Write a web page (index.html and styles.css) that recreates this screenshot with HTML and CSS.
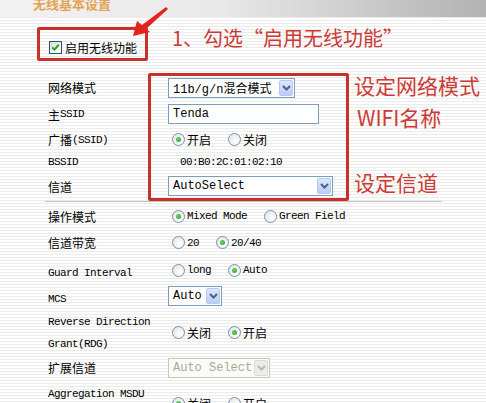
FILE: index.html
```html
<!DOCTYPE html>
<html lang="zh-CN">
<head>
    <meta charset="UTF-8">
    <meta name="viewport" content="width=device-width, initial-scale=1.0">
    <title>无线基本设置</title>
    <link rel="stylesheet" href="styles.css">
</head>
<body>
    <div class="topbar">
        <h2>无线基本设置</h2>
    </div>

    <!-- step 1: enable wireless -->
    <div class="step1">
        <label class="mark enable">
            <span class="check"><svg width="11" height="11" viewBox="0 0 11 11"><path d="M2.2 5.4l2.2 2.2 4.4-4.8" fill="none" stroke="#21a121" stroke-width="2"/></svg></span>
            启用无线功能
        </label>
        <p class="note note-1">1、勾选“启用无线功能”</p>
    </div>

    <!-- wireless mode / ssid / channel -->
    <div class="group">
        <div class="labels">
            <div class="row r1">网络模式</div>
            <div class="row r2">主<span class="en">SSID</span></div>
            <div class="row r3">广播<span class="en">(SSID)</span></div>
            <div class="row r4"><span class="en">BSSID</span></div>
            <div class="row r5">信道</div>
        </div>
        <div class="mark fields">
            <div class="row r1">
                <div class="sel w-mode"><span class="val"><span class="en-c">11b/g/n</span>混合模式</span><span class="btn"><svg width="9" height="6" viewBox="0 0 9 6"><path d="M1 1l3.5 3.5L8 1" fill="none" stroke="#4d6185" stroke-width="2"/></svg></span></div>
            </div>
            <div class="row r2">
                <div class="input w-ssid"><span class="en-c">Tenda</span></div>
            </div>
            <div class="row r3">
                <div class="radios">
                    <span class="opt"><span class="radio on"></span>开启</span>
                    <span class="opt"><span class="radio"></span>关闭</span>
                </div>
            </div>
            <div class="row r4">
                <span class="en bssid">00:B0:2C:01:02:10</span>
            </div>
            <div class="row r5">
                <div class="sel w-chan"><span class="val en-c">AutoSelect</span><span class="btn"><svg width="9" height="6" viewBox="0 0 9 6"><path d="M1 1l3.5 3.5L8 1" fill="none" stroke="#4d6185" stroke-width="2"/></svg></span></div>
            </div>
        </div>
        <div class="notes">
            <p class="note n-mode">设定网络模式</p>
            <p class="note n-ssid">WIFI名称</p>
            <p class="note n-chan">设定信道</p>
        </div>
    </div>

    <div class="sep"></div>

    <!-- advanced options -->
    <div class="form">
        <div class="field f-op">
            <div class="label">操作模式</div>
            <div class="radios">
                <span class="opt"><span class="radio on"></span><span class="en">Mixed Mode</span></span>
                <span class="opt"><span class="radio"></span><span class="en">Green Field</span></span>
            </div>
        </div>
        <div class="field f-bw">
            <div class="label">信道带宽</div>
            <div class="radios">
                <span class="opt"><span class="radio"></span><span class="en">20</span></span>
                <span class="opt"><span class="radio on"></span><span class="en">20/40</span></span>
            </div>
        </div>
        <div class="field f-gi">
            <div class="label"><span class="en">Guard Interval</span></div>
            <div class="radios">
                <span class="opt"><span class="radio"></span><span class="en">long</span></span>
                <span class="opt"><span class="radio on"></span><span class="en">Auto</span></span>
            </div>
        </div>
        <div class="field f-mcs">
            <div class="label"><span class="en">MCS</span></div>
            <div class="sel w-mcs"><span class="val en-c">Auto</span><span class="btn"><svg width="9" height="6" viewBox="0 0 9 6"><path d="M1 1l3.5 3.5L8 1" fill="none" stroke="#4d6185" stroke-width="2"/></svg></span></div>
        </div>
        <div class="field f-rdg">
            <div class="label two-line"><span class="en">Reverse Direction<br>Grant(RDG)</span></div>
            <div class="radios">
                <span class="opt"><span class="radio"></span>关闭</span>
                <span class="opt"><span class="radio on"></span>开启</span>
            </div>
        </div>
        <div class="field f-ext">
            <div class="label">扩展信道</div>
            <div class="sel w-ext disabled"><span class="val en-c">Auto Select</span><span class="btn"><svg width="9" height="6" viewBox="0 0 9 6"><path d="M1 1l3.5 3.5L8 1" fill="none" stroke="#b8b8b0" stroke-width="2"/></svg></span></div>
        </div>
        <div class="field f-agg">
            <div class="label two-line"><span class="en">Aggregation MSDU<br>(A-MSDU)</span></div>
            <div class="radios">
                <span class="opt"><span class="radio on"></span>关闭</span>
                <span class="opt"><span class="radio"></span>开启</span>
            </div>
        </div>
    </div>

    <!-- red arrow pointing at the checkbox -->
    <svg class="arrow" width="200" height="45" viewBox="0 0 200 45">
        <path d="M133 36 L137 21 L142 25 L166 7 L168 9 L146 29 L150 32 Z" fill="#e3231c"/>
    </svg>
</body>
</html>
```

FILE: styles.css
```css
body {
    margin: 0;
    width: 486px;
    height: 403px;
    overflow: hidden;
    position: relative;
    font-family: "Noto Sans CJK SC", sans-serif;
    font-size: 12px;
    color: #000;
    background: repeating-linear-gradient(to bottom, #fff 0, #fff 2px, #ebebeb 2px, #ebebeb 3px);
}

.en {
    font-family: "Liberation Mono", "Noto Sans CJK SC", monospace;
    font-size: 11px;
    letter-spacing: -0.6px;
}

.en-c {
    font-family: "Liberation Mono", "Noto Sans CJK SC", monospace;
    font-size: 12px;
}

.topbar {
    height: 17px;
    overflow: hidden;
    background: linear-gradient(to right, #f2f2f2 0%, #e9e9e9 45%, #b2b2b2 100%);
}

.topbar h2 {
    margin: -3px 0 0;
    padding-left: 33px;
    font-size: 13px;
    line-height: 14px;
    font-weight: bold;
    color: #e2a452;
}

.mark {
    box-sizing: border-box;
    border: 3px solid #c6322b;
    border-radius: 2px;
}

.note {
    margin: 0;
    color: #cb3a35;
    white-space: nowrap;
}

/* step 1 */
.step1 {
    display: flex;
    margin-top: 10px;
}

.enable {
    display: flex;
    align-items: center;
    gap: 3px;
    width: 111px;
    height: 34px;
    margin-left: 37px;
    padding: 6px 0 0 9px;
}

.check {
    display: flex;
    align-items: center;
    justify-content: center;
    width: 13px;
    height: 13px;
    box-sizing: border-box;
    border: 1px solid #2b5574;
    background: linear-gradient(135deg, #dcdcd6, #fff);
}

.note-1 {
    margin-left: 24px;
    font-size: 20px;
    line-height: 22px;
}

/* group with the second red frame */
.group {
    display: flex;
    margin-top: 12px;
}

.row {
    display: flex;
    align-items: center;
}

.r1 { height: 23px; }
.r2 { height: 30px; }
.r3 { height: 21px; }
.r4 { height: 24px; }
.r5 { height: 24px; }

.labels {
    width: 100px;
    margin-left: 48px;
    padding-top: 3px;
}

.fields {
    width: 201px;
    height: 128px;
    padding-left: 17px;
}

.notes {
    display: flex;
    flex-direction: column;
    margin-left: 5px;
    font-size: 21px;
    line-height: 24px;
}

.n-mode { margin-top: 0; }
.n-ssid { margin-top: 8px; padding-left: 3px; }
.n-chan { margin-top: 41px; }

.bssid {
    padding-left: 12px;
}

/* form controls */
.sel, .input {
    display: flex;
    align-items: center;
    height: 20px;
    box-sizing: border-box;
    border: 1px solid #7f9db9;
    background: #fff;
    padding-left: 4px;
    white-space: nowrap;
}

.sel .btn {
    display: flex;
    align-items: center;
    justify-content: center;
    width: 14px;
    height: 16px;
    margin-left: auto;
    margin-right: 1px;
    border-radius: 2px;
    background: linear-gradient(#dce7fc, #b9cdf5);
    border: 1px solid #b4c8f0;
    box-sizing: border-box;
}

.w-mode { width: 127px; }
.w-ssid { width: 151px; }
.w-chan { width: 165px; }
.w-mcs { width: 54px; }
.w-ext { width: 102px; }

.sel.disabled {
    border-color: #c9c7ba;
    color: #aca899;
    background: #fbfbf8;
}

.sel.disabled .btn {
    background: #ececea;
    border-color: #dcdcd6;
}

.radios {
    display: flex;
    gap: 17px;
    padding-left: 4px;
}

.opt {
    display: flex;
    align-items: center;
    gap: 2px;
    white-space: nowrap;
}

.radio {
    position: relative;
    width: 13px;
    height: 13px;
    box-sizing: border-box;
    border: 1px solid #7891aa;
    border-radius: 50%;
    background: radial-gradient(circle at 65% 65%, #fff, #dde1e6);
}

.radio.on::after {
    content: "";
    position: absolute;
    left: 3px;
    top: 3px;
    width: 5px;
    height: 5px;
    border-radius: 50%;
    background: radial-gradient(circle at 40% 40%, #6fd36f, #229a22);
}

.sep {
    width: 397px;
    height: 1px;
    margin-left: 45px;
    background: #c4c4c4;
}

/* advanced rows */
.field {
    display: flex;
    align-items: center;
    margin-left: 48px;
}

.field .label {
    width: 120px;
    flex-shrink: 0;
}

.two-line {
    line-height: 19px;
}

.f-op { height: 28px; }
.f-bw { height: 25px; }
.f-gi { height: 30px; }
.f-mcs { height: 22px; }
.f-rdg { height: 50px; }
.f-ext { height: 21px; }
.f-agg { height: 51px; }

.arrow {
    position: absolute;
    left: 0;
    top: 0;
    pointer-events: none;
}
```
